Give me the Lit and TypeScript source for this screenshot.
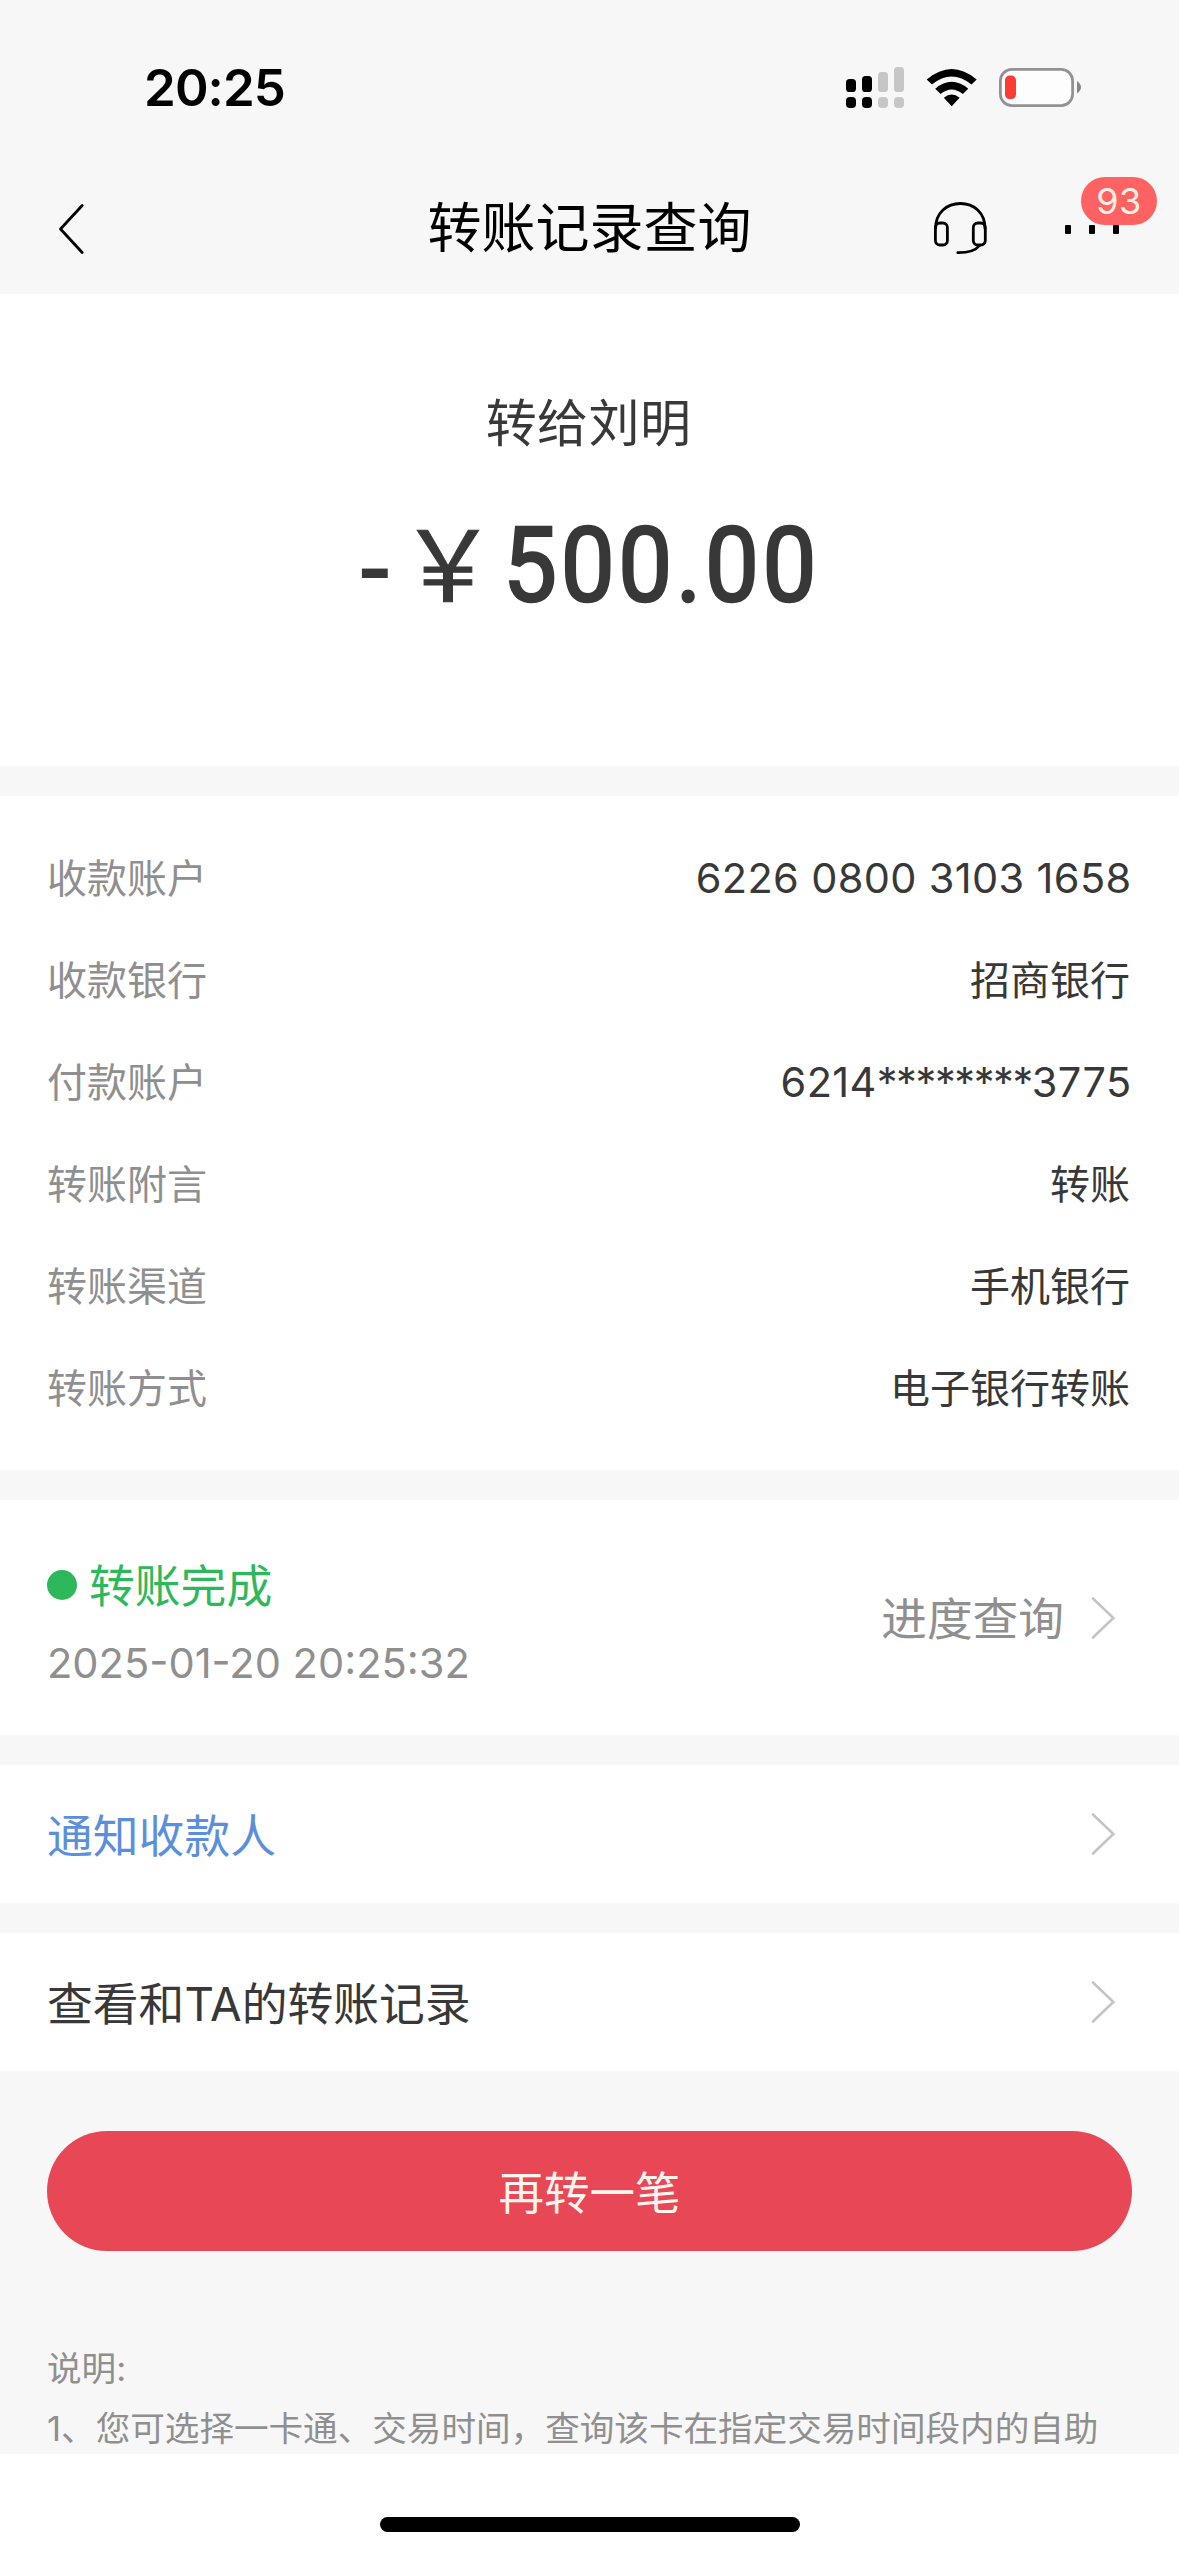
import { LitElement, html, svg, css } from "lit";
import { customElement, property } from "lit/decorators.js";

interface Detail {
  label: string;
  value: string;
  numeric?: boolean;
}

const DETAILS: Detail[] = [
  { label: "收款账户", value: "6226 0800 3103 1658", numeric: true },
  { label: "收款银行", value: "招商银行" },
  { label: "付款账户", value: "6214********3775", numeric: true },
  { label: "转账附言", value: "转账" },
  { label: "转账渠道", value: "手机银行" },
  { label: "转账方式", value: "电子银行转账" },
];

const SIGNAL = [
  { top: 12, on: true },
  { top: 9, on: true },
  { top: 5, on: false },
  { top: 0, on: false },
];

@customElement("status-bar")
class StatusBar extends LitElement {
  static styles = css`
    :host {
      display: flex;
      justify-content: space-between;
      box-sizing: border-box;
      height: 162px;
      padding: 62px 98px 0 144px;
    }
    .time {
      font: 600 51px/52px Inter, "Liberation Sans", sans-serif;
      letter-spacing: -0.9px;
      color: #000;
    }
    .icons {
      display: block;
      width: 236px;
      height: 48px;
    }
  `;

  render() {
    return html`
      <span class="time">20:25</span>
      <svg class="icons" viewBox="845 62 236 48">
        ${SIGNAL.map((bar, i) => {
          const x = 846 + i * 16;
          const fill = bar.on ? "#000" : "#c6c6c6";
          return svg`
            <rect x=${x} y=${67 + bar.top} width="10" height=${25 - bar.top} rx="3.6" fill=${fill}></rect>
            <rect x=${x} y="97" width="10" height="11" rx="4" fill=${fill}></rect>`;
        })}
        <path d="M926.7 79.5 Q951.7 58.5 976.7 79.5 L971.5 84.5 Q951.7 68.5 931.9 84.5 Z" fill="#000"></path>
        <path d="M935.2 88.7 Q951.7 75 968.2 88.7 L962.8 94 Q951.7 85 940.6 94 Z" fill="#000"></path>
        <path d="M943.8 97.8 Q951.7 91.4 959.6 97.8 L951.7 106.3 Z" fill="#000"></path>
        <rect x="1000.4" y="69.4" width="72.2" height="36.2" rx="11.5" fill="#fdfdfd" stroke="#929292" stroke-width="2.8"></rect>
        <rect x="1005" y="75.6" width="11" height="23.4" rx="4.5" fill="#fd3b30"></rect>
        <path d="M1077 81 Q1081 84 1081 87.3 Q1081 90.6 1077 93.6 Z" fill="#868686"></path>
      </svg>
    `;
  }
}

@customElement("nav-bar")
class NavBar extends LitElement {
  static styles = css`
    :host {
      display: grid;
      grid-template-columns: 1fr auto 1fr;
      align-items: center;
      box-sizing: border-box;
      height: 132px;
      padding: 0 18px 0 56px;
    }
    .back {
      display: block;
      width: 30px;
      height: 52px;
      margin-top: 2px;
    }
    .title {
      margin: -6px 38px 0 0;
      font: 400 54px/72px "Noto Sans CJK SC", sans-serif;
      color: #000;
    }
    .actions {
      display: flex;
      justify-content: flex-end;
      align-items: center;
      gap: 75px;
    }
    .headset {
      width: 60px;
      height: 60px;
    }
    .more {
      position: relative;
      display: flex;
      gap: 18px;
      width: 96px;
      padding-top: 3px;
    }
    .more i {
      width: 6px;
      height: 9px;
      border-radius: 1px;
      background: #000;
    }
    .badge {
      position: absolute;
      left: 16px;
      bottom: 9px;
      width: 76px;
      height: 48px;
      border-radius: 24px;
      background: #fe6263;
      color: #fff0e4;
      font: 400 36px/49px Inter, sans-serif;
      letter-spacing: 0.4px;
      text-align: center;
    }
  `;

  render() {
    return html`
      <svg class="back" viewBox="56 204 30 52">
        <path d="M82.2 206.5 L60.5 230 L82.2 253.5" fill="none" stroke="#000" stroke-width="2.8" stroke-linecap="round" stroke-linejoin="round"></path>
      </svg>
      <span class="title">转账记录查询</span>
      <div class="actions">
        <svg class="headset" viewBox="930 198 60 60" fill="none" stroke="#000" stroke-width="2.8" stroke-linecap="round">
          <path d="M935.6 228.5 C935.6 212.5 947 203.5 960.4 203.5 C973.8 203.5 985 212.5 985 228.5"></path>
          <rect x="935.4" y="223" width="12" height="22" rx="4.5"></rect>
          <rect x="973.3" y="223" width="12" height="22" rx="4.5"></rect>
          <path d="M979.5 245.5 Q974 252.8 957.8 252.7"></path>
        </svg>
        <div class="more"><i></i><i></i><i></i><span class="badge">93</span></div>
      </div>
    `;
  }
}

@customElement("chevron-right")
class ChevronRight extends LitElement {
  static styles = css`
    :host {
      display: block;
      width: 26px;
      height: 44px;
    }
    .icon {
      display: block;
    }
  `;

  render() {
    return html`
      <svg class="icon" width="26" height="44" viewBox="0 0 26 44">
        <path d="M3 2.5 L23.4 22 L3 41.5" fill="none" stroke="#c4c4c4" stroke-width="2.6" stroke-linecap="round"></path>
      </svg>
    `;
  }
}

@customElement("link-row")
class LinkRow extends LitElement {
  @property() label = "";

  static styles = css`
    :host {
      display: flex;
      align-items: center;
      justify-content: space-between;
      box-sizing: border-box;
      padding: 0 63px 0 47px;
      background: #fff;
    }
    .label {
      font: 400 45.8px/60px Inter, "Noto Sans CJK SC", sans-serif;
      padding-top: 6px;
    }
  `;

  render() {
    return html`<span class="label">${this.label}</span><chevron-right></chevron-right>`;
  }
}

@customElement("app-root")
class AppRoot extends LitElement {
  static styles = css`
    :host {
      display: flex;
      flex-direction: column;
      width: 1179px;
      height: 2556px;
      overflow: hidden;
      background: #f7f7f7;
      color: #383838;
      font-family: Inter, "Noto Sans CJK SC", sans-serif;
    }
    .scroll {
      display: flex;
      flex-direction: column;
      height: 2160px;
      overflow: hidden;
    }
    .scroll > * {
      flex: none;
    }
    .summary {
      display: flex;
      flex-direction: column;
      align-items: center;
      box-sizing: border-box;
      height: 472px;
      padding-top: 91px;
      background: #fff;
    }
    .payee {
      font: 400 51px/70px "Noto Sans CJK SC", sans-serif;
      letter-spacing: 0.4px;
      margin-right: 2px;
    }
    .amount {
      display: flex;
      align-items: baseline;
      margin-top: 38px;
      height: 130px;
      width: 463px;
      white-space: nowrap;
      line-height: 130px;
    }
    .amount > * {
      flex: none;
    }
    .minus {
      width: 41px;
      font: 500 100px/130px Roboto, sans-serif;
      transform: translateY(3px);
    }
    .yen {
      width: 104px;
      font: 400 98px/130px "Noto Sans CJK SC", sans-serif;
      -webkit-text-stroke: 1px currentColor;
    }
    .figure {
      font: 400 104px/130px Roboto, sans-serif;
      letter-spacing: 4px;
      -webkit-text-stroke: 2.6px currentColor;
      transform: scaleX(0.923);
      transform-origin: left;
    }
    .details {
      display: flex;
      flex-direction: column;
      box-sizing: border-box;
      height: 674px;
      margin-top: 30px;
      padding: 31.5px 49px 0 47px;
      background: #fff;
    }
    .detail {
      display: flex;
      align-items: center;
      justify-content: space-between;
      height: 102.1px;
      font-size: 40px;
      line-height: 60px;
    }
    .label {
      color: #8f8f8f;
    }
    .numeric {
      margin: -2px -1.5px 0 0;
      font-size: 41.5px;
      letter-spacing: 0.35px;
    }
    .mask {
      letter-spacing: -1.4px;
    }
    .progress {
      display: flex;
      align-items: center;
      justify-content: space-between;
      box-sizing: border-box;
      height: 235px;
      margin-top: 30px;
      padding: 0 63px 0 47px;
      background: #fff;
    }
    .state {
      display: flex;
      flex-direction: column;
      gap: 16px;
      padding-top: 15px;
    }
    .done {
      display: flex;
      align-items: center;
      gap: 12px;
      color: #2eb85c;
      font-size: 45.8px;
      line-height: 60px;
    }
    .dot {
      width: 30px;
      height: 30px;
      margin-top: -5px;
      border-radius: 50%;
      background: #2eb85c;
    }
    .when {
      color: #8f8f8f;
      font-size: 41.6px;
      line-height: 60px;
    }
    .query {
      display: flex;
      align-items: center;
      gap: 26px;
      color: #8f8f8f;
      font-size: 45.7px;
      line-height: 60px;
    }
    .query span {
      padding-top: 5px;
    }
    .notify {
      height: 138px;
      margin-top: 30px;
      color: #5b8fdc;
    }
    .records {
      height: 138px;
      margin-top: 30px;
    }
    .again {
      height: 120px;
      margin: 60px 47px 0;
      padding: 0 0 1px;
      border: 0;
      border-radius: 60px;
      background: #e84855;
      color: #fff4ee;
      font: 400 45.5px/119px "Noto Sans CJK SC", sans-serif;
      text-align: center;
    }
    .notes {
      margin: 87px 40px 0 47px;
      color: #8f8f8f;
      font-size: 34.6px;
      line-height: 60px;
      white-space: nowrap;
    }
    .home {
      display: flex;
      justify-content: center;
      flex: 1;
      padding-top: 63px;
      background: #fff;
    }
    .pill {
      width: 420px;
      height: 15px;
      border-radius: 8px;
      background: #000;
    }
  `;

  private renderValue(d: Detail) {
    const start = d.value.indexOf("*");
    if (start < 0) {
      return html`<span class=${d.numeric ? "numeric" : "value"}>${d.value}</span>`;
    }
    const end = d.value.lastIndexOf("*") + 1;
    return html`<span class="numeric">${d.value.slice(0, start)}<span class="mask">${d.value.slice(start, end)}</span>${d.value.slice(end)}</span>`;
  }

  render() {
    return html`
      <status-bar></status-bar>
      <nav-bar></nav-bar>
      <main class="scroll">
        <section class="summary">
          <div class="payee">转给刘明</div>
          <div class="amount">
            <span class="minus">-</span><span class="yen">￥</span><span class="figure">500.00</span>
          </div>
        </section>
        <section class="details">
          ${DETAILS.map(
            (d) => html`<div class="detail"><span class="label">${d.label}</span>${this.renderValue(d)}</div>`
          )}
        </section>
        <section class="progress">
          <div class="state">
            <div class="done"><span class="dot"></span><span>转账完成</span></div>
            <div class="when">2025-01-20 20:25:32</div>
          </div>
          <div class="query"><span>进度查询</span><chevron-right></chevron-right></div>
        </section>
        <link-row class="notify" label="通知收款人"></link-row>
        <link-row class="records" label="查看和TA的转账记录"></link-row>
        <button class="again">再转一笔</button>
        <div class="notes">
          <div>说明:</div>
          <div>1、您可选择一卡通、交易时间，查询该卡在指定交易时间段内的自助</div>
        </div>
      </main>
      <footer class="home"><div class="pill"></div></footer>
    `;
  }
}
